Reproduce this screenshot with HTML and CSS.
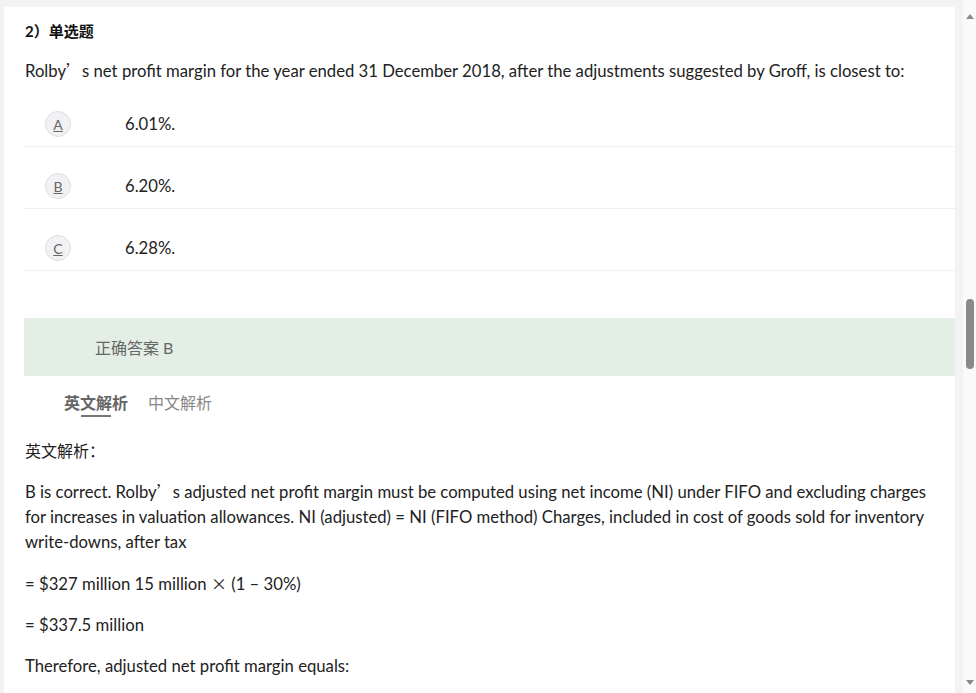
FILE: index.html
```html
<!DOCTYPE html>
<html lang="zh-CN">
<head>
<meta charset="utf-8">
<title>单选题</title>
<link rel="stylesheet" href="styles.css">
</head>
<body>
<div class="page">
  <main class="main">
    <h3 class="q-title">2）单选题</h3>
    <p class="q-text">Rolby<span class="cjk">’</span>s net profit margin for the year ended 31 December 2018, after the adjustments suggested by Groff, is closest to:</p>
    <ul class="options">
      <li class="option"><span class="opt-key">A</span><span class="opt-text">6.01%.</span></li>
      <li class="option"><span class="opt-key">B</span><span class="opt-text">6.20%.</span></li>
      <li class="option"><span class="opt-key">C</span><span class="opt-text">6.28%.</span></li>
    </ul>
    <div class="answer">正确答案 B</div>
    <div class="tabs">
      <span class="tab active">英文解析</span>
      <span class="tab">中文解析</span>
    </div>
    <div class="analysis">
      <p class="zh">英文解析：</p>
      <p>B is correct. Rolby<span class="cjk">’</span>s adjusted net profit margin must be computed using net income (NI) under FIFO and excluding charges for increases in valuation allowances. NI (adjusted) = NI (FIFO method) Charges, included in cost of goods sold for inventory write-downs, after tax</p>
      <p>= $327 million 15 million <span class="cjk">×</span> (1 – 30%)</p>
      <p>= $337.5 million</p>
      <p>Therefore, adjusted net profit margin equals:</p>
    </div>
  </main>
  <div class="gutter"></div>
  <div class="scrollbar">
    <span class="arrow up"></span>
    <span class="thumb"></span>
    <span class="arrow down"></span>
  </div>
</div>
</body>
</html>
```

FILE: styles.css
```css
* { box-sizing: border-box; }
html, body { margin: 0; padding: 0; }
body {
  background: #f3f3f3;
  font-family: "Lato", "Noto Sans CJK SC", sans-serif;
  color: #222;
  overflow: hidden;
  height: 693px;
}
.page {
  display: flex;
  height: 693px;
}
.main {
  width: 951px;
  margin: 7px 0 0 4px;
  background: #fff;
  padding: 12px 0 0 20px;
  overflow: hidden;
}
.cjk {
  font-family: "Noto Sans CJK SC", sans-serif;
  font-size: 16px;
}
.q-title {
  margin: 0;
  font-size: 15px;
  line-height: 24px;
  font-weight: 700;
  color: #111;
  padding-left: 1px;
}
.q-text {
  margin: 15px 0 0;
  font-size: 16.7px;
  line-height: 24px;
  padding-left: 1px;
}
.options {
  list-style: none;
  margin: 2px 0 0;
  padding: 0;
}
.option {
  display: flex;
  align-items: center;
  padding: 26px 0 9px 21px;
  border-bottom: 1px solid #f0f0f0;
}
.opt-key {
  width: 26px;
  height: 26px;
  border-radius: 50%;
  background: #f2f2f4;
  border: 1px solid #dedee2;
  color: #666;
  font-size: 14px;
  text-decoration: underline;
  display: flex;
  align-items: center;
  justify-content: center;
  flex: none;
}
.opt-text {
  margin-left: 54px;
  font-size: 16.7px;
  line-height: 24px;
}
.answer {
  margin-top: 47px;
  height: 58px;
  background: #e3efe5;
  padding-left: 71px;
  display: flex;
  align-items: center;
  font-size: 16px;
  color: #666;
}
.tabs {
  display: flex;
  gap: 20px;
  margin: 15px 0 0 40px;
}
.tab {
  position: relative;
  font-size: 16px;
  line-height: 24px;
  padding-bottom: 2px;
  color: #888;
}
.tab.active {
  font-weight: 700;
  color: #666;
}
.tab.active::after {
  content: "";
  position: absolute;
  left: 17px;
  width: 30px;
  bottom: 0;
  height: 2px;
  background: #777;
}
.analysis {
  margin-top: 21px;
  padding-left: 1px;
  padding-right: 10px;
}
.analysis p {
  margin: 0 0 16px;
  font-size: 16.7px;
  line-height: 25px;
}
.analysis p.zh {
  font-size: 16px;
}
.gutter {
  width: 8px;
  background: #f3f3f3;
}
.scrollbar {
  width: 13px;
  background: #fafafa;
  position: relative;
}
.thumb {
  position: absolute;
  left: 3px;
  top: 299px;
  width: 8px;
  height: 70px;
  border-radius: 4px;
  background: #8a8a8a;
}
.arrow {
  position: absolute;
  left: 3px;
  width: 0;
  height: 0;
  border-left: 4px solid transparent;
  border-right: 4px solid transparent;
}
.arrow.up {
  top: 14px;
  border-bottom: 5px solid #8a8a8a;
}
.arrow.down {
  top: 680px;
  border-top: 5px solid #8a8a8a;
}
```
